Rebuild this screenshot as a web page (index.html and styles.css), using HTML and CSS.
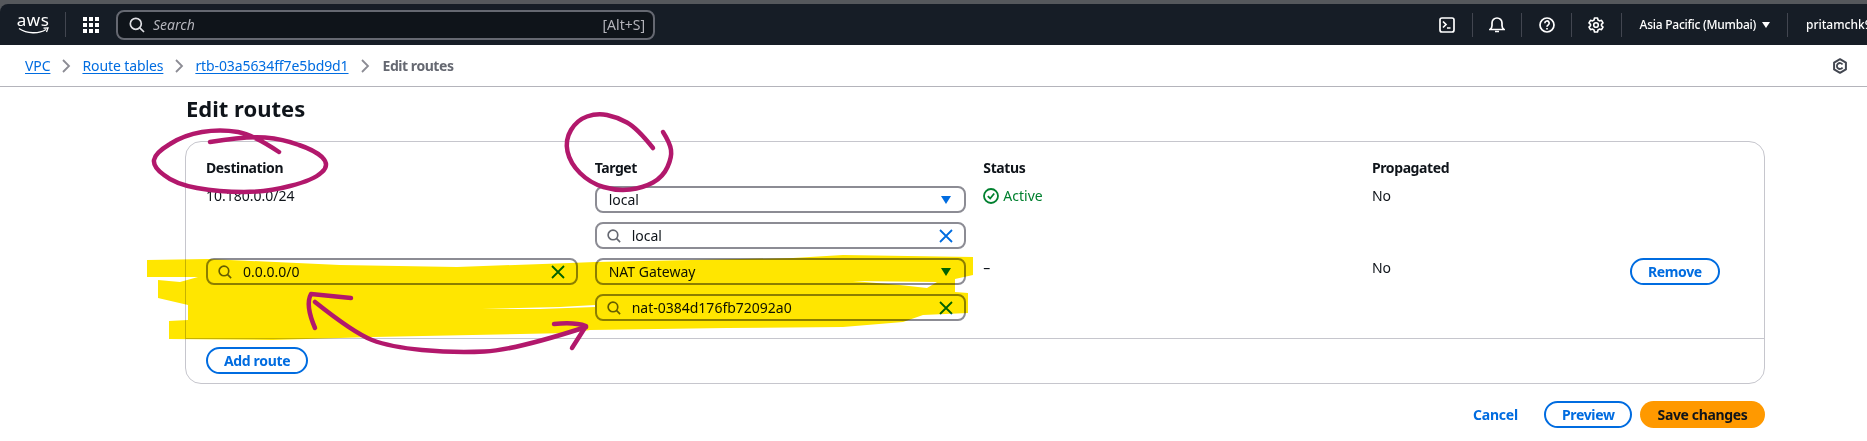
FILE: index.html
```html
<!DOCTYPE html>
<html lang="en">
<head>
<meta charset="UTF-8">
<meta name="viewport" content="width=device-width, initial-scale=1.0">
<title>Edit routes</title>
<link rel="stylesheet" href="styles.css">
</head>
<body>

<div class="shell">
  <header class="topnav">
    <div class="logo">
      <span class="logo-text">aws</span>
      <svg class="logo-smile" width="31" height="7" viewBox="0 0 31 7"><path d="M1 1.5C9 7 21 7 28 2.5" fill="none" stroke="#fff" stroke-width="1.4"/><path d="M25.5 1.2L30 1l-1.5 4" fill="none" stroke="#fff" stroke-width="1.3"/></svg>
    </div>
    <div class="apps">
      <svg width="16" height="16" viewBox="0 0 16 16" fill="#fff"><rect width="4" height="4"/><rect x="6" width="4" height="4"/><rect x="12" width="4" height="4"/><rect y="6" width="4" height="4"/><rect x="6" y="6" width="4" height="4"/><rect x="12" y="6" width="4" height="4"/><rect y="12" width="4" height="4"/><rect x="6" y="12" width="4" height="4"/><rect x="12" y="12" width="4" height="4"/></svg>
    </div>
    <div class="search">
      <svg width="16" height="16" viewBox="0 0 16 16" fill="none" stroke="#dedee3" stroke-width="1.7"><circle cx="6.8" cy="6.8" r="5.5"/><path d="M10.8 10.8L15 15"/></svg>
      <span class="search-hint">Search</span>
      <span class="search-key">[Alt+S]</span>
    </div>
    <div class="tools">
      <div class="tool">
        <svg width="16" height="16" viewBox="0 0 16 16" fill="none" stroke="#fff" stroke-width="1.7"><rect x="1" y="1" width="14" height="14" rx="2"/><path d="M4 4.5L7 7.5 4 10.5M8 11h3.5"/></svg>
      </div>
      <div class="tool">
        <svg width="16" height="16" viewBox="0 0 16 16" fill="none" stroke="#fff" stroke-width="1.7"><path d="M1 12.5h14c-1.5-1-2-2-2-4V6A5 5 0 0 0 3 6v2.5c0 2-.5 3-2 4z"/><path d="M6 14.5h4"/></svg>
      </div>
      <div class="tool">
        <svg width="16" height="16" viewBox="0 0 16 16" fill="none" stroke="#fff" stroke-width="1.7"><circle cx="8" cy="8" r="7"/><path d="M5.8 6.2a2.2 2.2 0 1 1 3.3 1.9c-.8.5-1.1.9-1.1 1.7"/><path d="M8 11v1.5"/></svg>
      </div>
      <div class="tool">
        <svg width="16" height="16" viewBox="0 0 16 16" fill="none" stroke="#fff" stroke-width="1.6" stroke-linejoin="round"><circle cx="8" cy="8" r="2.3"/><path d="M6.5 1h3l.5 2 1.5.9 2-.6 1.5 2.6-1.5 1.4v1.4l1.5 1.4-1.5 2.6-2-.6-1.5.9-.5 2h-3l-.5-2-1.500-.9-2 .6L1 10.100l1.500-1.400V7.300L1 5.900l1.500-2.600 2 .6L6 3z"/></svg>
      </div>
      <div class="region">Asia Pacific (Mumbai) <span class="region-caret"></span></div>
      <div class="user">pritamchk9</div>
    </div>
  </header>
</div>

<nav class="crumbs">
  <a class="crumb-link" href="#">VPC</a>
  <svg class="chevron" width="16" height="16" viewBox="0 0 16 16"><path d="M5 2l6 6-6 6" fill="none" stroke="#8c8c94" stroke-width="1.8"/></svg>
  <a class="crumb-link" href="#">Route tables</a>
  <svg class="chevron" width="16" height="16" viewBox="0 0 16 16"><path d="M5 2l6 6-6 6" fill="none" stroke="#8c8c94" stroke-width="1.8"/></svg>
  <a class="crumb-link" href="#">rtb-03a5634ff7e5bd9d1</a>
  <svg class="chevron" width="16" height="16" viewBox="0 0 16 16"><path d="M5 2l6 6-6 6" fill="none" stroke="#8c8c94" stroke-width="1.8"/></svg>
  <span class="crumb-current">Edit routes</span>
  <svg class="crumb-help" width="16" height="16" viewBox="0 0 16 16" fill="none" stroke="#424650" stroke-width="2"><path d="M8 1.2l5.9 3.4v6.8L8 14.8l-5.900-3.400V4.600z" stroke-linejoin="round"/><path d="M10.500 9.500A3 3 0 1 1 10.500 6.500" stroke-width="1.8"/></svg>
</nav>

<main class="content">
  <h1>Edit routes</h1>

  <section class="card">
    <div class="routes">
      <div class="col-head">Destination</div>
      <div class="col-head">Target</div>
      <div class="col-head">Status</div>
      <div class="col-head">Propagated</div>
      <div></div>

      <div class="cell">10.180.0.0/24</div>
      <div class="stack">
        <div class="field">
          <span class="field-text">local</span>
          <span class="caret"></span>
        </div>
        <div class="field">
          <svg class="field-search" width="14" height="14" viewBox="0 0 16 16" fill="none" stroke="#656871" stroke-width="1.9"><circle cx="6.8" cy="6.8" r="5.5"/><path d="M10.8 10.8L15 15"/></svg>
          <span class="field-text">local</span>
          <svg class="clear" width="14" height="14" viewBox="0 0 14 14" fill="none" stroke="#006ce0" stroke-width="1.8"><path d="M1 1l12 12M13 1L1 13"/></svg>
        </div>
      </div>
      <div class="cell status-ok">
        <svg width="16" height="16" viewBox="0 0 16 16" fill="none" stroke="#00802f" stroke-width="1.8"><circle cx="8" cy="8" r="7"/><path d="M4.8 8.2L7.2 10.5 11.2 5.5"/></svg>
        Active
      </div>
      <div class="cell">No</div>
      <div></div>

      <div class="field">
        <svg class="field-search" width="14" height="14" viewBox="0 0 16 16" fill="none" stroke="#656871" stroke-width="1.9"><circle cx="6.8" cy="6.8" r="5.5"/><path d="M10.8 10.8L15 15"/></svg>
        <span class="field-text">0.0.0.0/0</span>
        <svg class="clear" width="14" height="14" viewBox="0 0 14 14" fill="none" stroke="#006ce0" stroke-width="1.8"><path d="M1 1l12 12M13 1L1 13"/></svg>
      </div>
      <div class="stack">
        <div class="field">
          <span class="field-text">NAT Gateway</span>
          <span class="caret"></span>
        </div>
        <div class="field">
          <svg class="field-search" width="14" height="14" viewBox="0 0 16 16" fill="none" stroke="#656871" stroke-width="1.9"><circle cx="6.8" cy="6.8" r="5.5"/><path d="M10.8 10.8L15 15"/></svg>
          <span class="field-text">nat-0384d176fb72092a0</span>
          <svg class="clear" width="14" height="14" viewBox="0 0 14 14" fill="none" stroke="#006ce0" stroke-width="1.8"><path d="M1 1l12 12M13 1L1 13"/></svg>
        </div>
      </div>
      <div class="cell">–</div>
      <div class="cell">No</div>
      <div><button class="btn btn-line">Remove</button></div>
    </div>
    <div class="card-foot">
      <button class="btn btn-line">Add route</button>
    </div>
  </section>

  <div class="actions">
    <a class="cancel" href="#">Cancel</a>
    <button class="btn btn-line btn-preview">Preview</button>
    <button class="btn btn-save">Save changes</button>
  </div>
</main>

<!-- marker scribbled over the screenshot -->
<svg class="marker marker-yellow" width="1867" height="441" viewBox="0 0 1867 441">
  <path fill="#ffe600" fill-rule="evenodd" d="M147 260L208 259 340 265 457 267 570 263 595 262 793 258 843 255 973 257 973 275 955 279 955 292 968 293 968 313 923 315 903 322 843 327 727 328 590 330 570 333 373 337 273 340 169 339 169 321 188 320 188 305 158 298 158 280 180 282 198 277 147 277Z M853 281L937 282 927 288 900 285Z M482 309L560 307 595 305 595 307 540 309Z"/>
</svg>
<svg class="marker" width="1867" height="441" viewBox="0 0 1867 441" fill="none" stroke="#b2186c" stroke-width="4.5" stroke-linecap="round" stroke-linejoin="round">
  <path d="M279 152Q254 135 238 132Q220 129 202 132Q184 135 170 144Q155 153 154 160Q153 167 164 175Q175 184 197 188Q219 192 244 192Q268 192 290 186Q314 180 322 172Q330 165 322 157Q314 150 299 145Q283 139 265 137.5Q247 136 210 142"/>
  <path d="M653 148Q637 128 627 122.5Q617 117 607 115Q597 113 587 116.5Q577 120 571 130Q565 140 567.5 151.5Q570 163 580 173Q590 183 603.5 187Q617 191 630 189.5Q643 188 653 182.5Q663 177 667.5 167Q672 157 671 150Q670 143 663 132"/>
  <path d="M315 302Q354 333 372 340Q390 347 422 350Q454 353 484.5 351.5Q515 350 586 327"/>
  <path d="M351 298L311 294Q305 305 315 328"/>
  <path d="M554 324Q575 322 586 326L572 348"/>
</svg>

</body>
</html>
```

FILE: styles.css
```css
* {
  box-sizing: border-box;
}
body {
  margin: 0;
  font-family: "Noto Sans", sans-serif;
  font-size: 14px;
  line-height: 20px;
  color: #0f141a;
  background-color: white;
  overflow: hidden;
}
.shell {
  background-color: #55585c;
  padding-top: 4px;
}
.topnav {
  display: flex;
  align-items: center;
  height: 41px;
  background-color: #161d26;
  border-radius: 8px 0 0 0;
  color: white;
  overflow: hidden;
}
.logo {
  display: flex;
  flex-direction: column;
  align-items: center;
  width: 49px;
  height: 25px;
  margin-left: 17px;
  padding-right: 16px;
  border-right: 1px solid #424650;
}
.logo-text {
  font-size: 17px;
  line-height: 15px;
  letter-spacing: 0.5px;
}
.logo-smile {
  display: block;
}
.apps {
  display: flex;
  margin-left: 17px;
}
.search {
  display: flex;
  align-items: center;
  width: 539px;
  height: 30px;
  margin-left: 17px;
  padding: 0 8px 0 11px;
  background-color: #0f141a;
  border: 2px solid #656871;
  border-radius: 8px;
  color: #b4b4bb;
}
.search-hint {
  margin-left: 8px;
  font-style: italic;
}
.search-key {
  margin-left: auto;
}
.tools {
  display: flex;
  align-items: center;
  margin-left: auto;
}
.tool {
  display: flex;
  justify-content: center;
  align-items: center;
  width: 49.67px;
  height: 24px;
  border-right: 1px solid #424650;
}
.region {
  display: flex;
  align-items: center;
  gap: 6px;
  height: 24px;
  padding: 0 17px 0 18px;
  border-right: 1px solid #424650;
  font-size: 12px;
  font-weight: 500;
  letter-spacing: -0.25px;
  white-space: nowrap;
}
.region-caret {
  border-left: 4px solid transparent;
  border-right: 4px solid transparent;
  border-top: 6px solid white;
}
.user {
  width: 61px;
  margin-left: 18px;
  overflow: hidden;
  font-size: 12px;
  font-weight: 500;
  white-space: nowrap;
}
.crumbs {
  display: flex;
  align-items: center;
  gap: 8px;
  height: 42px;
  padding: 0 19px 0 25px;
  border-bottom: 1px solid #b4b4bb;
}
.crumb-link {
  color: #006ce0;
  letter-spacing: -0.1px;
  text-decoration: underline;
  text-underline-offset: 2px;
}
.crumb-current {
  margin-left: 2px;
  font-weight: 700;
  letter-spacing: -0.45px;
  color: #656871;
}
.crumb-help {
  margin-left: auto;
}
.content {
  padding: 6px 102px 14px 185px;
}
h1 {
  margin: 0 0 18px 1px;
  font-size: 22px;
  line-height: 30px;
  font-weight: 700;
}
.card {
  border: 1px solid #c6c6cd;
  border-radius: 16px;
}
.routes {
  display: grid;
  grid-template-columns: repeat(3, 371.67px) 241px 89px;
  column-gap: 17px;
  row-gap: 9px;
  padding: 16px 20px 17px 20px;
  border-bottom: 1px solid #c6c6cd;
}
.col-head {
  font-weight: 700;
  line-height: 19px;
  letter-spacing: -0.4px;
}
.stack {
  display: flex;
  flex-direction: column;
  gap: 9px;
}
.field {
  display: flex;
  align-items: center;
  height: 27px;
  padding: 0 11px 0 12px;
  border: 2px solid #8c8c94;
  border-radius: 8px;
  background-color: white;
}
.field-search {
  margin-left: -2px;
  margin-right: 11px;
}
.clear {
  margin-left: auto;
}
.caret {
  margin-left: auto;
  margin-right: 2px;
  border-left: 5px solid transparent;
  border-right: 5px solid transparent;
  border-top: 8px solid #006ce0;
}
.status-ok {
  display: flex;
  align-items: flex-start;
  gap: 4px;
  color: #00802f;
}
.status-ok svg {
  margin-top: 2px;
}
.card-foot {
  padding: 8px 20px 9px;
}
.btn {
  height: 27px;
  padding: 0 16px;
  border-radius: 20px;
  font-family: inherit;
  font-size: 14px;
  font-weight: 700;
  line-height: 20px;
  letter-spacing: -0.35px;
  cursor: pointer;
}
.btn-line {
  background-color: white;
  border: 2px solid #006ce0;
  color: #006ce0;
}
.btn-save {
  width: 125px;
  background-color: #ff9900;
  border: none;
  color: #0f141a;
}
.btn-preview {
  width: 88px;
  margin-left: 18px;
}
.actions {
  display: flex;
  align-items: center;
  justify-content: flex-end;
  gap: 8px;
  margin-top: 17px;
}
.cancel {
  color: #006ce0;
  font-weight: 700;
  letter-spacing: -0.2px;
  text-decoration: none;
}
.marker {
  position: absolute;
  top: 0;
  left: 0;
  pointer-events: none;
}
.marker-yellow {
  mix-blend-mode: multiply;
}
```
